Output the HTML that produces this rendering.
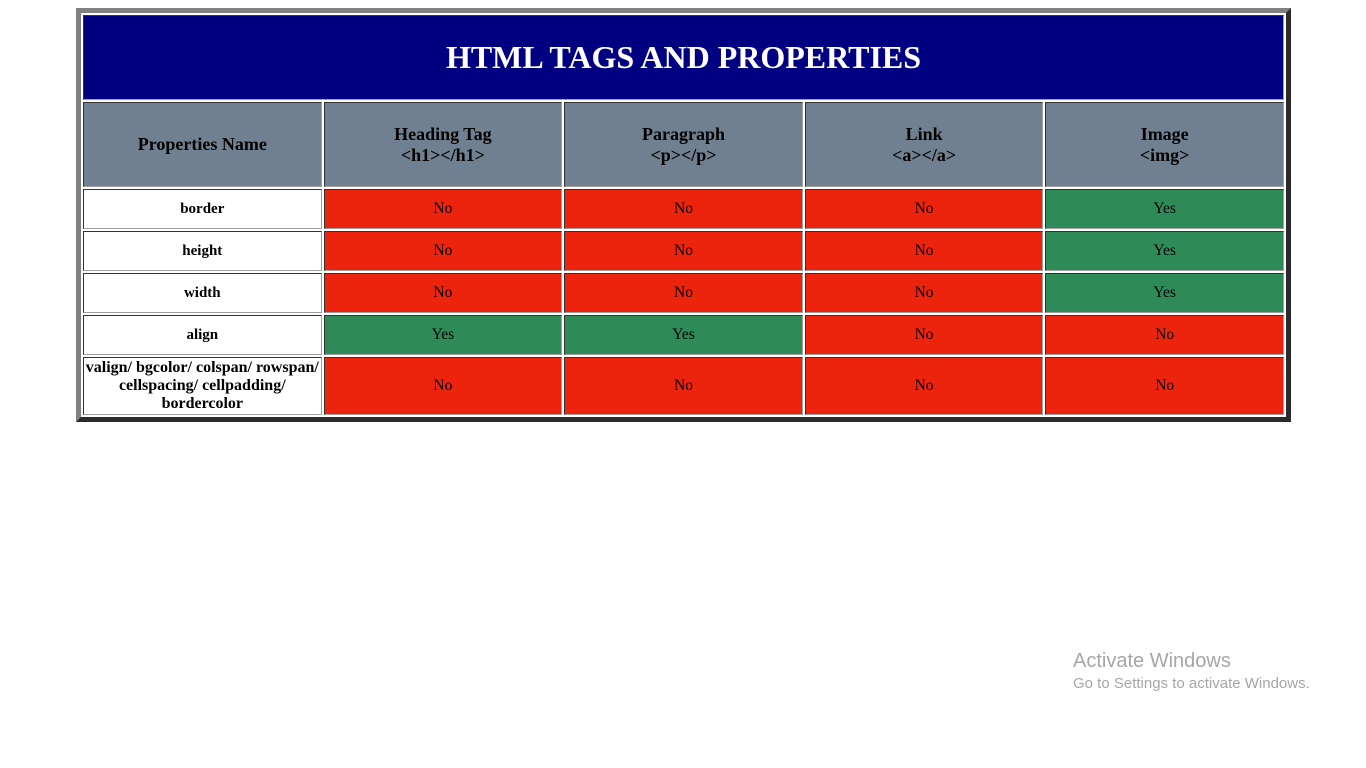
<!DOCTYPE html>
<html><head><meta charset="utf-8"><style>
html,body{margin:0;padding:0;background:#fff;}
table{position:absolute;left:76px;top:8px;width:1215px;border-collapse:separate;border-spacing:2px;
border:5px solid;border-color:#808080 #2b2b2b #2b2b2b #808080;font-family:"Liberation Serif",serif;table-layout:fixed;}
td,th{border:1px solid;border-color:#333 #a0a0a0 #a0a0a0 #333;text-align:center;padding:0;color:#000;}
.t{background:#000080;color:#fff;font-size:32px;font-weight:bold;height:83px;}
.h th{background:#708090;font-size:18px;height:83px;line-height:21px;}
.r td{height:38px;font-size:15.5px;}
td.n{background:#fff;font-weight:bold;font-size:15px;}
.no{background:#ec240d;}
.y{background:#2e8b57;}
.last td{height:56px;}
.last td.n{line-height:18px;font-size:16px;}
.aw{position:absolute;left:1073px;top:650px;color:#a6a6a6;font-family:"Liberation Sans",sans-serif;}
</style></head><body>
<table>
<tr><th colspan="5" class="t">HTML TAGS AND PROPERTIES</th></tr>
<tr class="h"><th>Properties Name</th><th>Heading Tag<br>&lt;h1&gt;&lt;/h1&gt;</th><th>Paragraph<br>&lt;p&gt;&lt;/p&gt;</th><th>Link<br>&lt;a&gt;&lt;/a&gt;</th><th>Image<br>&lt;img&gt;</th></tr>
<tr class="r"><td class="n">border</td><td class="no">No</td><td class="no">No</td><td class="no">No</td><td class="y">Yes</td></tr>
<tr class="r"><td class="n">height</td><td class="no">No</td><td class="no">No</td><td class="no">No</td><td class="y">Yes</td></tr>
<tr class="r"><td class="n">width</td><td class="no">No</td><td class="no">No</td><td class="no">No</td><td class="y">Yes</td></tr>
<tr class="r"><td class="n">align</td><td class="y">Yes</td><td class="y">Yes</td><td class="no">No</td><td class="no">No</td></tr>
<tr class="r last"><td class="n">valign/ bgcolor/ colspan/ rowspan/<br>cellspacing/ cellpadding/<br>bordercolor</td><td class="no">No</td><td class="no">No</td><td class="no">No</td><td class="no">No</td></tr>
</table>
<div class="aw"><div style="font-size:20px;">Activate Windows</div><div style="font-size:15px;margin-top:2px;">Go to Settings to activate Windows.</div></div>
</body></html>
